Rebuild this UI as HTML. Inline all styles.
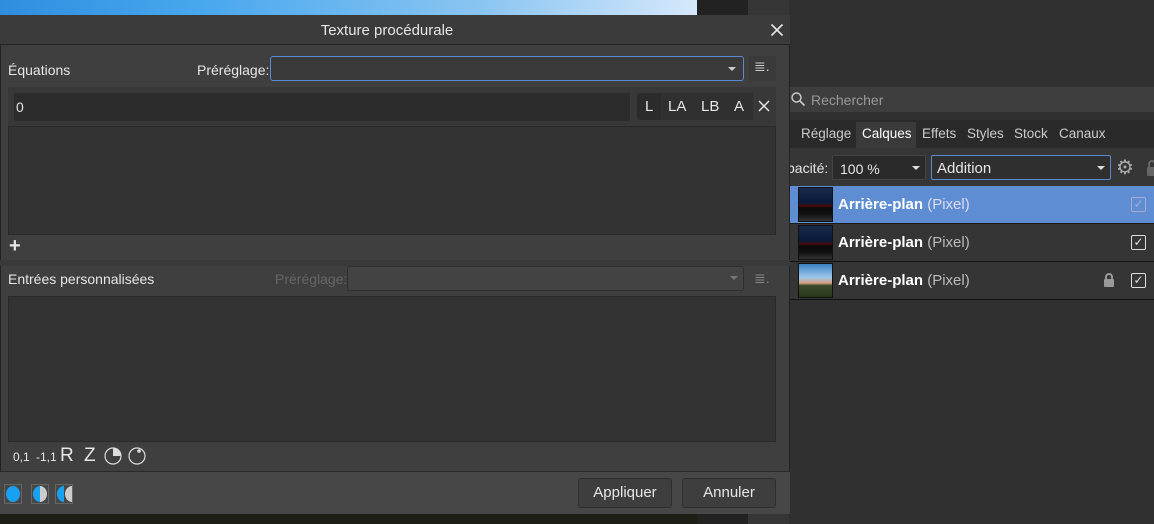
<!DOCTYPE html><html><head><meta charset="utf-8"><style>
*{margin:0;padding:0;box-sizing:border-box}
body{width:1154px;height:524px;overflow:hidden;background:#303030;font-family:"Liberation Sans",sans-serif;position:relative;color:#e6e6e6;font-size:14px}
.a{position:absolute}
.t{position:absolute;white-space:nowrap}
</style></head><body>
<div class="a" style="left:0;top:0;width:697px;height:16px;background:linear-gradient(90deg,#2f8ee0,#4aa8ee 30%,#8cc6f2 70%,#d6e8fb)"></div>
<div class="a" style="left:697px;top:0;width:51px;height:524px;background:#222"></div>
<div class="a" style="left:748px;top:0;width:42px;height:524px;background:#363636"></div>
<div class="a" style="left:0;top:514px;width:697px;height:10px;background:#1d1f17"></div>
<div class="a" style="left:789px;top:0;width:365px;height:524px;background:#303030"></div>
<div class="a" style="left:789px;top:87px;width:365px;height:25px;background:#3e3e3e"></div>
<svg class="a" style="left:790px;top:91px" width="16" height="16"><circle cx="6.5" cy="6.5" r="4.5" fill="none" stroke="#ccc" stroke-width="1.4"/><path d="M10 10l4.5 4.5" stroke="#ccc" stroke-width="1.6"/></svg>
<div class="t" style="left:811px;top:92px;color:#999;font-size:14px">Rechercher</div>
<div class="a" style="left:789px;top:120px;width:365px;height:28px;background:#2a2a2a"></div>
<div class="a" style="left:856px;top:122px;width:60px;height:26px;background:#3a3a3a"></div>
<div class="t" style="left:801px;top:126px;color:#ccc;font-size:13.5px">Réglage</div>
<div class="t" style="left:862px;top:126px;color:#fff;font-size:13.5px">Calques</div>
<div class="t" style="left:922px;top:126px;color:#ccc;font-size:13.5px">Effets</div>
<div class="t" style="left:967px;top:126px;color:#ccc;font-size:13.5px">Styles</div>
<div class="t" style="left:1014px;top:126px;color:#ccc;font-size:13.5px">Stock</div>
<div class="t" style="left:1059px;top:126px;color:#ccc;font-size:13.5px">Canaux</div>
<div class="a" style="left:789px;top:148px;width:365px;height:38px;background:#363636"></div>
<div class="t" style="left:787px;top:160px;font-size:14px">pacité:</div>
<div class="a" style="left:832px;top:155px;width:94px;height:25px;background:#2a2a2a;border:1px solid #444;border-radius:2px"></div>
<div class="t" style="left:840px;top:161px;font-size:14px">100 %</div>
<div class="a" style="left:912px;top:166px;border:4px solid transparent;border-top:4px solid #ddd;border-bottom:0"></div>
<div class="a" style="left:931px;top:155px;width:180px;height:25px;background:#2f2f2f;border:1px solid #5a8ad0;border-radius:2px"></div>
<div class="t" style="left:937px;top:160px;font-size:15px">Addition</div>
<div class="a" style="left:1097px;top:166px;border:4px solid transparent;border-top:4px solid #ddd;border-bottom:0"></div>
<div class="t" style="left:1116px;top:155px;font-size:20px;color:#aaa">⚙</div>
<div class="a" style="left:1147px;top:167px;width:10px;height:9px;background:#666;border-radius:1px"></div>
<div class="a" style="left:1148px;top:160px;width:8px;height:9px;border:2px solid #666;border-bottom:0;border-radius:4px 4px 0 0"></div>
<div class="a" style="left:789px;top:186px;width:365px;height:38px;background:#5f8dd3;border-bottom:1px solid #1a1a1a"></div>
<div class="a" style="left:789px;top:224px;width:365px;height:38px;background:#353535;border-bottom:1px solid #111"></div>
<div class="a" style="left:789px;top:262px;width:365px;height:38px;background:#353535;border-bottom:1px solid #111"></div>
<div class="a" style="left:798px;top:187px;width:35px;height:35px;border:1px solid #111;background:linear-gradient(#1a2a4a 0,#0a1a3a 45%,#4a0a0a 55%,#0a0a0a 60%,#111 80%,#333)"></div>
<div class="a" style="left:798px;top:225px;width:35px;height:35px;border:1px solid #111;background:linear-gradient(#1a2a4a 0,#0a1a3a 45%,#4a0a0a 55%,#0a0a0a 60%,#111 80%,#333)"></div>
<div class="a" style="left:798px;top:263px;width:35px;height:35px;border:1px solid #111;background:linear-gradient(#3a7fc0,#9cc8ec 40%,#d8a080 58%,#3a4a2a 65%,#283818)"></div>
<div class="t" style="left:838px;top:196px;font-size:15px"><b style="color:#fff">Arrière-plan</b> <span style="color:#dde">(Pixel)</span></div>
<div class="t" style="left:838px;top:234px;font-size:15px"><b style="color:#fff">Arrière-plan</b> <span style="color:#bbb">(Pixel)</span></div>
<div class="t" style="left:838px;top:272px;font-size:15px"><b style="color:#fff">Arrière-plan</b> <span style="color:#bbb">(Pixel)</span></div>
<div class="a" style="left:1131px;top:197px;width:15px;height:15px;border:1px solid #aac;border-radius:2px;color:#aac;font-size:12px;text-align:center;line-height:13px">✓</div>
<div class="a" style="left:1131px;top:235px;width:15px;height:15px;border:1px solid #ddd;border-radius:2px;color:#ddd;font-size:12px;text-align:center;line-height:13px">✓</div>
<div class="a" style="left:1131px;top:273px;width:15px;height:15px;border:1px solid #ddd;border-radius:2px;color:#ddd;font-size:12px;text-align:center;line-height:13px">✓</div>
<div class="a" style="left:1104px;top:279px;width:10px;height:8px;background:#999;border-radius:1px"></div>
<div class="a" style="left:1105px;top:273px;width:8px;height:8px;border:2px solid #999;border-bottom:0;border-radius:4px 4px 0 0"></div>
<div class="a" style="left:0;top:15px;width:790px;height:499px;background:#3f3f3f;border:1px solid #222"></div>
<div class="a" style="left:0;top:15px;width:790px;height:30px;background:#3b3b3b;border-bottom:1px solid #242424"></div>
<div class="t" style="left:0;width:774px;top:22px;text-align:center;font-size:15px">Texture procédurale</div>
<svg class="a" style="left:770px;top:23px" width="14" height="14"><path d="M1.5 1.5l11 11M12.5 1.5l-11 11" stroke="#e6e6e6" stroke-width="1.6"/></svg>
<div class="t" style="left:8px;top:62px;font-size:14px">Équations</div>
<div class="t" style="left:197px;top:62px;font-size:14px">Préréglage:</div>
<div class="a" style="left:270px;top:56px;width:474px;height:25px;background:#3a3a3a;border:1px solid #5a8ad0;border-radius:3px"></div>
<div class="a" style="left:728px;top:67px;border:4px solid transparent;border-top:4px solid #ccc;border-bottom:0"></div>
<div class="a" style="left:749px;top:56px;width:27px;height:25px;background:#3a3a3a"></div>
<div class="t" style="left:754px;top:58px;font-size:14px;color:#ccc">≣.</div>
<div class="a" style="left:8px;top:87px;width:768px;height:148px;background:#333;border:1px solid #2a2a2a"></div>
<div class="a" style="left:8px;top:87px;width:768px;height:40px;background:#383838;border-bottom:1px solid #2a2a2a"></div>
<div class="a" style="left:14px;top:93px;width:616px;height:28px;background:#2c2c2c;border-radius:2px"></div>
<div class="t" style="left:16px;top:99px;font-size:14px">0</div>
<div class="a" style="left:637px;top:93px;width:116px;height:27px;background:#2b2b2b;border-radius:3px"></div>
<div class="a" style="left:661px;top:93px;width:92px;height:27px;background:#303030"></div>
<div class="t" style="left:645px;top:98px;font-size:15px">L</div>
<div class="t" style="left:668px;top:98px;font-size:15px">LA</div>
<div class="t" style="left:701px;top:98px;font-size:15px">LB</div>
<div class="t" style="left:734px;top:98px;font-size:15px">A</div>
<svg class="a" style="left:758px;top:100px" width="12" height="12"><path d="M1 1l10 10M11 1L1 11" stroke="#e6e6e6" stroke-width="1.5"/></svg>
<div class="t" style="left:9px;top:235px;font-size:20px;font-weight:bold">+</div>
<div class="a" style="left:0;top:260px;width:790px;height:6px;background:#3a3a3a"></div>
<div class="t" style="left:8px;top:271px;font-size:14px">Entrées personnalisées</div>
<div class="t" style="left:275px;top:271px;font-size:14px;color:#666">Préréglage:</div>
<div class="a" style="left:347px;top:266px;width:397px;height:25px;background:#434343;border:1px solid #2e2e2e;border-radius:3px"></div>
<div class="a" style="left:730px;top:276px;border:4px solid transparent;border-top:4px solid #777;border-bottom:0"></div>
<div class="t" style="left:754px;top:270px;font-size:14px;color:#888">≣.</div>
<div class="a" style="left:8px;top:296px;width:768px;height:146px;background:#333;border:1px solid #2a2a2a"></div>
<div class="t" style="left:13px;top:450px;font-size:12px">0,1</div>
<div class="t" style="left:36px;top:450px;font-size:12px">-1,1</div>
<div class="t" style="left:60px;top:445px;font-size:19px">R</div>
<div class="t" style="left:84px;top:445px;font-size:19px">Z</div>
<svg class="a" style="left:103px;top:446px" width="44" height="20"><circle cx="10" cy="10" r="8" fill="none" stroke="#ddd" stroke-width="1.2"/><path d="M10 10V2A8 8 0 0 1 18 10Z" fill="#ddd"/><circle cx="34" cy="10" r="8" fill="none" stroke="#ddd" stroke-width="1.2"/><circle cx="36" cy="5" r="1.8" fill="#ddd"/></svg>
<div class="a" style="left:0;top:471px;width:790px;height:43px;background:#474747;border-top:1px solid #2a2a2a"></div>
<svg class="a" style="left:4px;top:484px" width="72" height="20"><rect x="0.5" y="0.5" width="17" height="19" fill="none" stroke="#666"/><ellipse cx="9" cy="10" rx="7" ry="8" fill="#1aa0f0"/><rect x="27.5" y="0.5" width="17" height="19" fill="none" stroke="#666"/><path d="M36 2A7 8 0 0 0 36 18Z" fill="#1aa0f0"/><path d="M36 2A7 8 0 0 1 36 18Z" fill="#ccc"/><rect x="51.5" y="0.5" width="17" height="19" fill="none" stroke="#666"/><path d="M60 2A7 8 0 0 0 60 18Z" fill="#1aa0f0"/><path d="M68 2A7 8 0 0 0 68 18Z" fill="#ccc"/></svg>
<div class="a" style="left:578px;top:478px;width:94px;height:30px;background:#3e3e3e;border:1px solid #2e2e2e;border-radius:3px;text-align:center;line-height:28px;font-size:15px">Appliquer</div>
<div class="a" style="left:682px;top:478px;width:94px;height:30px;background:#3e3e3e;border:1px solid #2e2e2e;border-radius:3px;text-align:center;line-height:28px;font-size:15px">Annuler</div>
</body></html>
